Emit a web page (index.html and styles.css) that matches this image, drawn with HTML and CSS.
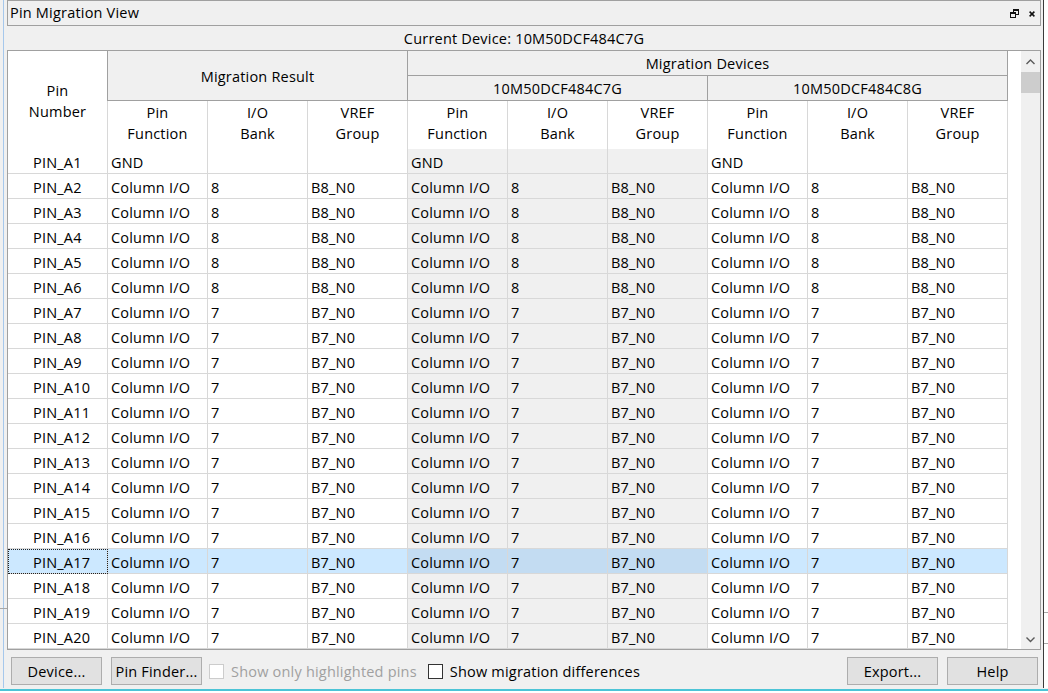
FILE: index.html
```html
<!DOCTYPE html>
<html>
<head>
<meta charset="utf-8">
<title>Pin Migration View</title>
<link rel="stylesheet" href="styles.css">
</head>
<body>
<div class="desk">
  <div class="gutter-left"></div>
  <div class="window">
    <div class="titlebar">
      <span class="title">Pin Migration View</span>
      <span class="tb-icons">
        <svg class="ic-restore" width="9" height="9" viewBox="0 0 9 9">
          <rect x="3.5" y="0.5" width="5" height="5" fill="none" stroke="#111" stroke-width="1"/>
          <rect x="3" y="0" width="6" height="2" fill="#111"/>
          <rect x="0.5" y="3.5" width="5" height="5" fill="#f0f0f0" stroke="#111" stroke-width="1"/>
          <rect x="0" y="3" width="6" height="2" fill="#111"/>
        </svg>
        <svg class="ic-close" width="6" height="6" viewBox="0 0 6 6">
          <path d="M0.6 0.6 L5.4 5.4 M5.4 0.6 L0.6 5.4" stroke="#111" stroke-width="1.5"/>
        </svg>
      </span>
    </div>
    <div class="device-line">Current Device: 10M50DCF484C7G</div>
    <div class="frame">
      <div class="grid">
        <div class="h-pin"><span>Pin</span><span>Number</span></div>
        <div class="h-grp g-result">Migration Result</div>
        <div class="h-grp g-devices">Migration Devices</div>
        <div class="h-grp g-dev1">10M50DCF484C7G</div>
        <div class="h-grp g-dev2">10M50DCF484C8G</div>
        <div class="h-sub"><span>Pin</span><span>Function</span></div>
        <div class="h-sub"><span>I/O</span><span>Bank</span></div>
        <div class="h-sub"><span>VREF</span><span>Group</span></div>
        <div class="h-sub"><span>Pin</span><span>Function</span></div>
        <div class="h-sub"><span>I/O</span><span>Bank</span></div>
        <div class="h-sub"><span>VREF</span><span>Group</span></div>
        <div class="h-sub"><span>Pin</span><span>Function</span></div>
        <div class="h-sub"><span>I/O</span><span>Bank</span></div>
        <div class="h-sub"><span>VREF</span><span>Group</span></div>

        <div class="row"><div class="c pin">PIN_A1</div><div class="c">GND</div><div class="c"></div><div class="c"></div><div class="c d1">GND</div><div class="c d1"></div><div class="c d1"></div><div class="c">GND</div><div class="c"></div><div class="c"></div></div>
        <div class="row"><div class="c pin">PIN_A2</div><div class="c">Column I/O</div><div class="c">8</div><div class="c">B8_N0</div><div class="c d1">Column I/O</div><div class="c d1">8</div><div class="c d1">B8_N0</div><div class="c">Column I/O</div><div class="c">8</div><div class="c">B8_N0</div></div>
        <div class="row"><div class="c pin">PIN_A3</div><div class="c">Column I/O</div><div class="c">8</div><div class="c">B8_N0</div><div class="c d1">Column I/O</div><div class="c d1">8</div><div class="c d1">B8_N0</div><div class="c">Column I/O</div><div class="c">8</div><div class="c">B8_N0</div></div>
        <div class="row"><div class="c pin">PIN_A4</div><div class="c">Column I/O</div><div class="c">8</div><div class="c">B8_N0</div><div class="c d1">Column I/O</div><div class="c d1">8</div><div class="c d1">B8_N0</div><div class="c">Column I/O</div><div class="c">8</div><div class="c">B8_N0</div></div>
        <div class="row"><div class="c pin">PIN_A5</div><div class="c">Column I/O</div><div class="c">8</div><div class="c">B8_N0</div><div class="c d1">Column I/O</div><div class="c d1">8</div><div class="c d1">B8_N0</div><div class="c">Column I/O</div><div class="c">8</div><div class="c">B8_N0</div></div>
        <div class="row"><div class="c pin">PIN_A6</div><div class="c">Column I/O</div><div class="c">8</div><div class="c">B8_N0</div><div class="c d1">Column I/O</div><div class="c d1">8</div><div class="c d1">B8_N0</div><div class="c">Column I/O</div><div class="c">8</div><div class="c">B8_N0</div></div>
        <div class="row"><div class="c pin">PIN_A7</div><div class="c">Column I/O</div><div class="c">7</div><div class="c">B7_N0</div><div class="c d1">Column I/O</div><div class="c d1">7</div><div class="c d1">B7_N0</div><div class="c">Column I/O</div><div class="c">7</div><div class="c">B7_N0</div></div>
        <div class="row"><div class="c pin">PIN_A8</div><div class="c">Column I/O</div><div class="c">7</div><div class="c">B7_N0</div><div class="c d1">Column I/O</div><div class="c d1">7</div><div class="c d1">B7_N0</div><div class="c">Column I/O</div><div class="c">7</div><div class="c">B7_N0</div></div>
        <div class="row"><div class="c pin">PIN_A9</div><div class="c">Column I/O</div><div class="c">7</div><div class="c">B7_N0</div><div class="c d1">Column I/O</div><div class="c d1">7</div><div class="c d1">B7_N0</div><div class="c">Column I/O</div><div class="c">7</div><div class="c">B7_N0</div></div>
        <div class="row"><div class="c pin">PIN_A10</div><div class="c">Column I/O</div><div class="c">7</div><div class="c">B7_N0</div><div class="c d1">Column I/O</div><div class="c d1">7</div><div class="c d1">B7_N0</div><div class="c">Column I/O</div><div class="c">7</div><div class="c">B7_N0</div></div>
        <div class="row"><div class="c pin">PIN_A11</div><div class="c">Column I/O</div><div class="c">7</div><div class="c">B7_N0</div><div class="c d1">Column I/O</div><div class="c d1">7</div><div class="c d1">B7_N0</div><div class="c">Column I/O</div><div class="c">7</div><div class="c">B7_N0</div></div>
        <div class="row"><div class="c pin">PIN_A12</div><div class="c">Column I/O</div><div class="c">7</div><div class="c">B7_N0</div><div class="c d1">Column I/O</div><div class="c d1">7</div><div class="c d1">B7_N0</div><div class="c">Column I/O</div><div class="c">7</div><div class="c">B7_N0</div></div>
        <div class="row"><div class="c pin">PIN_A13</div><div class="c">Column I/O</div><div class="c">7</div><div class="c">B7_N0</div><div class="c d1">Column I/O</div><div class="c d1">7</div><div class="c d1">B7_N0</div><div class="c">Column I/O</div><div class="c">7</div><div class="c">B7_N0</div></div>
        <div class="row"><div class="c pin">PIN_A14</div><div class="c">Column I/O</div><div class="c">7</div><div class="c">B7_N0</div><div class="c d1">Column I/O</div><div class="c d1">7</div><div class="c d1">B7_N0</div><div class="c">Column I/O</div><div class="c">7</div><div class="c">B7_N0</div></div>
        <div class="row"><div class="c pin">PIN_A15</div><div class="c">Column I/O</div><div class="c">7</div><div class="c">B7_N0</div><div class="c d1">Column I/O</div><div class="c d1">7</div><div class="c d1">B7_N0</div><div class="c">Column I/O</div><div class="c">7</div><div class="c">B7_N0</div></div>
        <div class="row"><div class="c pin">PIN_A16</div><div class="c">Column I/O</div><div class="c">7</div><div class="c">B7_N0</div><div class="c d1">Column I/O</div><div class="c d1">7</div><div class="c d1">B7_N0</div><div class="c">Column I/O</div><div class="c">7</div><div class="c">B7_N0</div></div>
        <div class="row sel"><div class="c pin focus">PIN_A17</div><div class="c">Column I/O</div><div class="c">7</div><div class="c">B7_N0</div><div class="c d1">Column I/O</div><div class="c d1">7</div><div class="c d1">B7_N0</div><div class="c">Column I/O</div><div class="c">7</div><div class="c">B7_N0</div></div>
        <div class="row"><div class="c pin">PIN_A18</div><div class="c">Column I/O</div><div class="c">7</div><div class="c">B7_N0</div><div class="c d1">Column I/O</div><div class="c d1">7</div><div class="c d1">B7_N0</div><div class="c">Column I/O</div><div class="c">7</div><div class="c">B7_N0</div></div>
        <div class="row"><div class="c pin">PIN_A19</div><div class="c">Column I/O</div><div class="c">7</div><div class="c">B7_N0</div><div class="c d1">Column I/O</div><div class="c d1">7</div><div class="c d1">B7_N0</div><div class="c">Column I/O</div><div class="c">7</div><div class="c">B7_N0</div></div>
        <div class="row"><div class="c pin">PIN_A20</div><div class="c">Column I/O</div><div class="c">7</div><div class="c">B7_N0</div><div class="c d1">Column I/O</div><div class="c d1">7</div><div class="c d1">B7_N0</div><div class="c">Column I/O</div><div class="c">7</div><div class="c">B7_N0</div></div>
      </div>
      <div class="spacer"></div>
      <div class="scrollbar">
        <div class="sb-btn up">
          <svg width="19" height="21" viewBox="0 0 19 21"><polyline points="5.5,13 9.5,9 13.5,13" fill="none" stroke="#5a5a5a" stroke-width="1.4"/></svg>
        </div>
        <div class="sb-thumb"></div>
        <div class="sb-track"></div>
        <div class="sb-btn down">
          <svg width="19" height="20" viewBox="0 0 19 20"><polyline points="5.5,8.5 9.5,12.5 13.5,8.5" fill="none" stroke="#5a5a5a" stroke-width="1.4"/></svg>
        </div>
      </div>
    </div>
    <div class="bottombar">
      <button class="btn">Device...</button>
      <button class="btn">Pin Finder...</button>
      <label class="check disabled"><span class="box"></span><span class="lbl">Show only highlighted pins</span></label>
      <label class="check"><span class="box"></span><span class="lbl">Show migration differences</span></label>
      <button class="btn push">Export...</button>
      <button class="btn">Help</button>
    </div>
  </div>
  <div class="gutter-right"></div>
</div>
<div class="taskstrip"></div>
</body>
</html>
```

FILE: styles.css
```css
* { box-sizing: border-box; }
html, body { margin: 0; padding: 0; }
body {
  width: 1048px;
  height: 693px;
  overflow: hidden;
  font-family: "Open Sans", "Noto Sans", sans-serif;
  font-size: 14.5px;
  letter-spacing: 0.2px;
  line-height: 20px;
  color: #000;
  background: #fff;
  display: flex;
  flex-direction: column;
}
.desk { display: flex; height: 688px; }
.gutter-left {
  width: 7px;
  background:
    linear-gradient(#a8a8a8, #a8a8a8) 0 608px / 7px 1px no-repeat,
    linear-gradient(#a6c8ec, #a6c8ec) 3px 0 / 1px 100% no-repeat,
    #f0f0f0;
}
.gutter-right {
  flex: 1;
  background:
    linear-gradient(#a8a8a8, #a8a8a8) 0 612px / 100% 1px no-repeat,
    linear-gradient(#a8a8a8, #a8a8a8) 0 643px / 100% 1px no-repeat,
    #fff;
}
.taskstrip {
  height: 5px;
  background: linear-gradient(#f0f0f0 0 1px, #4cc4d6 1px 3px, #fff 3px);
}
.window {
  width: 1037px;
  background: #f0f0f0;
  border-right: 1px solid #3a3a3a;
  padding-right: 2px;
  display: flex;
  flex-direction: column;
}
.titlebar {
  height: 26px;
  border: 1px solid #a0a0a0;
  display: flex;
  align-items: center;
  padding: 0 5px 0 2px;
}
.title { flex: 1; }
.tb-icons { display: flex; align-items: center; gap: 10px; }
.ic-restore { margin-top: 1px; }
.ic-close { margin-top: 1px; }
.device-line {
  height: 24px;
  padding-top: 1px;
  display: flex;
  align-items: center;
  justify-content: center;
}
.frame {
  height: 600px;
  border: 1px solid #a0a0a0;
  background: #fff;
  display: flex;
}
.grid {
  display: grid;
  grid-template-columns: repeat(10, 100px);
  grid-template-rows: 25px 25px 48px repeat(20, 25px);
  width: 1000px;
}
.h-pin {
  grid-column: 1;
  grid-row: 1 / 4;
  background:
    linear-gradient(#a0a0a0, #a0a0a0) right top / 1px 50px no-repeat,
    linear-gradient(#d8d8d8, #d8d8d8) right bottom / 1px 48px no-repeat,
    #fff;
  padding: 29px 1px 0 0;
  display: flex;
  flex-direction: column;
  align-items: center;
  line-height: 21px;
}
.h-grp {
  background: #f0f0f0;
  border-right: 1px solid #a0a0a0;
  border-bottom: 1px solid #a0a0a0;
  padding-top: 1px;
  display: flex;
  align-items: center;
  justify-content: center;
}
.g-result { grid-column: 2 / 5; grid-row: 1 / 3; padding-top: 2px; }
.g-devices { grid-column: 5 / 11; grid-row: 1; }
.g-dev1 { grid-column: 5 / 8; grid-row: 2; }
.g-dev2 { grid-column: 8 / 11; grid-row: 2; }
.h-sub {
  grid-row: 3;
  border-right: 1px solid #d8d8d8;
  padding-top: 1px;
  display: flex;
  flex-direction: column;
  align-items: center;
  line-height: 21px;
}
.row { display: contents; }
.c {
  border-right: 1px solid #d8d8d8;
  border-bottom: 1px solid #d8d8d8;
  padding: 3px 0 0 3px;
  display: flex;
  align-items: center;
  white-space: nowrap;
}
.c.pin { padding-left: 25px; }
.c.d1 { background: #f0f0f0; }
.row.sel .c { background: #cce8ff; }
.row.sel .c.d1 { background: #c3dcf2; }
.c.focus { outline: 1px dotted #222; outline-offset: -1px; }
.spacer { flex: 1; }
.scrollbar {
  width: 19px;
  background: #f0f0f0;
  display: flex;
  flex-direction: column;
}
.sb-btn { display: flex; }
.sb-btn.up { height: 21px; }
.sb-btn.down { height: 20px; }
.sb-thumb { height: 21px; background: #cdcdcd; }
.sb-track { flex: 1; }
.bottombar {
  height: 38px;
  display: flex;
  align-items: flex-start;
  padding: 7px 3px 0 4px;
}
.btn {
  width: 91px;
  height: 28px;
  border: 1px solid #adadad;
  background: #e1e1e1;
  font: inherit;
  letter-spacing: inherit;
  color: #000;
  padding: 1px 0 0;
  margin: 0 9px 0 0;
  display: flex;
  align-items: center;
  justify-content: center;
}
.btn:last-child { margin-right: 0; }
.btn.push { margin-left: auto; }
.check {
  display: flex;
  align-items: center;
  height: 28px;
  gap: 7px;
  margin-left: -2px;
}
.check + .check { margin-left: 11px; }
.lbl { padding-top: 1px; }
.box {
  width: 15px;
  height: 15px;
  border: 1px solid #333;
  background: #fff;
}
.check.disabled .box { border-color: #cccccc; }
.check.disabled .lbl { color: #a0a0a0; }
```
